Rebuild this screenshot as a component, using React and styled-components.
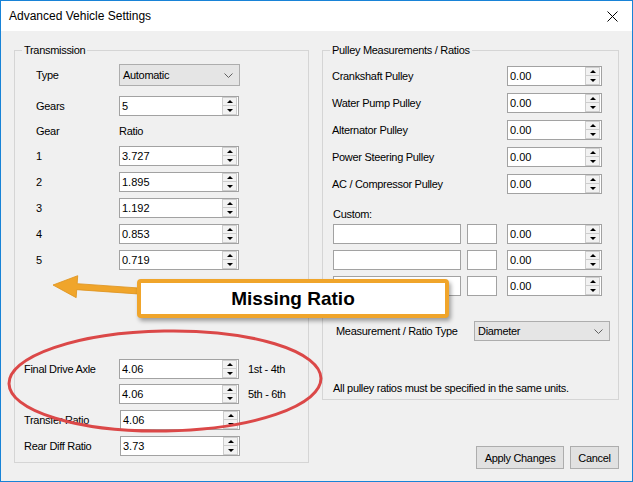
import React from 'react';
import styled, { createGlobalStyle } from 'styled-components';

const GlobalStyle = createGlobalStyle`
  html, body {
    margin: 0;
    padding: 0;
    background: #ffffff;
  }
  body {
    font-family: "Liberation Sans", Arial, sans-serif;
    font-size: 11px;
    color: #000;
  }
`;

const Window = styled.div`
  position: relative;
  box-sizing: border-box;
  width: 633px;
  height: 482px;
  border: 1px solid #1883d7;
  background: #f0f0f0;
  display: flex;
  flex-direction: column;
  overflow: hidden;
`;

const TitleBar = styled.div`
  height: 30px;
  flex: none;
  background: #fff;
  display: flex;
  align-items: center;
  justify-content: space-between;
  padding: 0 14px 0 8px;
  font-size: 12px;
`;

const Body = styled.div`
  flex: 1;
  display: flex;
  gap: 13px;
  padding: 19px 13px 0 13px;
`;

const Column = styled.div`
  display: flex;
  flex-direction: column;
  align-items: ${p => p.$align || 'stretch'};
`;

const GroupBox = styled.div`
  position: relative;
  box-sizing: border-box;
  width: ${p => p.$w}px;
  height: ${p => p.$h}px;
  border: 1px solid #d5d5d5;
  padding-top: ${p => p.$pt}px;
  display: flex;
  flex-direction: column;
`;

const Caption = styled.span`
  position: absolute;
  top: -7px;
  left: 7px;
  padding: 0 2px;
  line-height: 13px;
  background: #f0f0f0;
  letter-spacing: -0.3px;
`;

const Row = styled.div`
  display: flex;
  align-items: center;
  flex: none;
  height: ${p => p.$h || 20}px;
  margin-top: ${p => p.$mt || 0}px;
  padding-left: ${p => p.$indent || 0}px;
`;

const Label = styled.span`
  flex: none;
  width: ${p => (p.$w ? `${p.$w}px` : 'auto')};
  margin-left: ${p => p.$ml || 0}px;
  white-space: nowrap;
  letter-spacing: -0.3px;
`;

const Field = styled.div`
  box-sizing: border-box;
  flex: none;
  width: ${p => p.$w}px;
  height: 20px;
  margin-left: ${p => p.$ml || 0}px;
  display: flex;
  align-items: flex-start;
  background: #fff;
  border: 1px solid #a2a2a2;
`;

const FieldText = styled.span`
  flex: 1;
  padding: 2px 0 0 2px;
  line-height: 14px;
`;

const Spinner = styled.div`
  flex: none;
  width: 15px;
  height: 18px;
  margin-right: 1px;
  display: flex;
  flex-direction: column;
`;

const SpinButton = styled.div`
  box-sizing: border-box;
  height: 9px;
  display: flex;
  align-items: center;
  justify-content: center;
  background: #f2f2f2;
  border: 1px solid #cdcdcd;
  & + & {
    border-top: none;
  }
`;

const Arrow = styled.span`
  width: 0;
  height: 0;
  border-left: 3px solid transparent;
  border-right: 3px solid transparent;
  ${p =>
    p.$up
      ? 'border-bottom: 3px solid #000;'
      : 'border-top: 3px solid #000;'}
`;

const Combo = styled.div`
  box-sizing: border-box;
  flex: none;
  width: ${p => p.$w}px;
  height: ${p => p.$h || 22}px;
  display: flex;
  align-items: center;
  justify-content: space-between;
  padding: 0 6px 0 3px;
  background: #e5e5e5;
  border: 1px solid #adadad;
  letter-spacing: -0.3px;
`;

const ButtonBar = styled.div`
  display: flex;
  gap: 6px;
  margin-top: 46px;
`;

const Button = styled.button`
  box-sizing: border-box;
  width: ${p => p.$w}px;
  height: 23px;
  padding: 0;
  background: #e1e1e1;
  border: 1px solid #adadad;
  font-family: "Liberation Sans", Arial, sans-serif;
  font-size: 11px;
  letter-spacing: -0.3px;
  color: #000;
`;

const Overlay = styled.svg`
  position: absolute;
  left: -1px;
  top: -1px;
  pointer-events: none;
`;

const Callout = styled.div`
  position: absolute;
  left: 136px;
  top: 278px;
  box-sizing: border-box;
  width: 312px;
  height: 39px;
  display: flex;
  align-items: center;
  justify-content: center;
  background: #fff;
  border: 4px solid #f0a52b;
  border-radius: 4px;
  box-shadow: 2px 3px 4px rgba(0, 0, 0, 0.35);
  font-weight: bold;
  font-size: 19px;
`;

const SpinBox = ({ w = 120, ml, value }) => (
  <Field $w={w} $ml={ml}>
    <FieldText>{value}</FieldText>
    <Spinner>
      <SpinButton><Arrow $up /></SpinButton>
      <SpinButton><Arrow /></SpinButton>
    </Spinner>
  </Field>
);

const Chevron = () => (
  <svg width="9" height="5" viewBox="0 0 9 5">
    <polyline points="0.5,0.5 4.5,4.5 8.5,0.5" fill="none" stroke="#606060" strokeWidth="1" />
  </svg>
);

const CloseIcon = () => (
  <svg width="11" height="11" viewBox="0 0 11 11">
    <path d="M0.5 0.5 L10.5 10.5 M10.5 0.5 L0.5 10.5" stroke="#000" strokeWidth="1" />
  </svg>
);

const ratios = ['3.727', '1.895', '1.192', '0.853', '0.719'];

const pulleys = [
  'Crankshaft Pulley',
  'Water Pump Pulley',
  'Alternator Pulley',
  'Power Steering Pulley',
  'AC / Compressor Pulley'
];

const App = () => {
  return (
    <>
      <GlobalStyle />
      <Window>
        <TitleBar>
          <span>Advanced Vehicle Settings</span>
          <CloseIcon />
        </TitleBar>
        <Body>
          <GroupBox $w={295} $h={413} $pt={13}>
            <Caption>Transmission</Caption>
            <Row $h={22} $indent={21}>
              <Label $w={83}>Type</Label>
              <Combo $w={121}>
                <span>Automatic</span>
                <Chevron />
              </Combo>
            </Row>
            <Row $mt={10} $indent={21}>
              <Label $w={83}>Gears</Label>
              <SpinBox value="5" />
            </Row>
            <Row $h={18} $mt={6} $indent={21}>
              <Label $w={83}>Gear</Label>
              <Label>Ratio</Label>
            </Row>
            {ratios.map((r, i) => (
              <Row key={r} $mt={6} $indent={21}>
                <Label $w={83}>{i + 1}</Label>
                <SpinBox value={r} />
              </Row>
            ))}
            <Row $mt={89} $indent={9}>
              <Label $w={95}>Final Drive Axle</Label>
              <SpinBox value="4.06" />
              <Label $ml={9}>1st - 4th</Label>
            </Row>
            <Row $mt={5} $indent={9}>
              <Label $w={95} />
              <SpinBox value="4.06" />
              <Label $ml={9}>5th - 6th</Label>
            </Row>
            <Row $mt={6} $indent={9}>
              <Label $w={96}>Transfer Ratio</Label>
              <SpinBox value="4.06" />
            </Row>
            <Row $mt={6} $indent={9}>
              <Label $w={96}>Rear Diff Ratio</Label>
              <SpinBox value="3.73" />
            </Row>
          </GroupBox>

          <Column $align="flex-end">
            <GroupBox $w={297} $h={350} $pt={15}>
              <Caption>Pulley Measurements / Ratios</Caption>
              {pulleys.map((p, i) => (
                <Row key={p} $mt={i ? 7 : 0} $indent={9}>
                  <Label $w={175}>{p}</Label>
                  <SpinBox w={95} value="0.00" />
                </Row>
              ))}
              <Row $h={12} $mt={14} $indent={10}>
                <Label>Custom:</Label>
              </Row>
              {[0, 1, 2].map(i => (
                <Row key={i} $mt={i ? 6 : 4} $indent={10}>
                  <Field $w={128} />
                  <Field $w={30} $ml={6} />
                  <SpinBox w={95} ml={10} value="0.00" />
                </Row>
              ))}
              <Row $mt={25} $indent={13}>
                <Label $w={138}>Measurement / Ratio Type</Label>
                <Combo $w={136} $h={20}>
                  <span>Diameter</span>
                  <Chevron />
                </Combo>
              </Row>
              <Row $h={14} $mt={40} $indent={10}>
                <Label>All pulley ratios must be specified in the same units.</Label>
              </Row>
            </GroupBox>
            <ButtonBar>
              <Button $w={88}>Apply Changes</Button>
              <Button $w={49}>Cancel</Button>
            </ButtonBar>
          </Column>
        </Body>

        <Overlay width="633" height="482" viewBox="0 0 633 482">
          <ellipse
            cx="165"
            cy="381"
            rx="156"
            ry="50"
            transform="rotate(-1 165 381)"
            fill="none"
            stroke="#db4848"
            strokeWidth="3"
          />
          <g transform="rotate(4 53 285)">
            <polygon
              points="53,285 77,274 77,282 145,282 145,288 77,288 77,296"
              fill="#f0a52b"
              stroke="#de931d"
              strokeWidth="0.8"
              strokeLinejoin="round"
            />
          </g>
        </Overlay>
        <Callout>Missing Ratio</Callout>
      </Window>
    </>
  );
};

export default App;
